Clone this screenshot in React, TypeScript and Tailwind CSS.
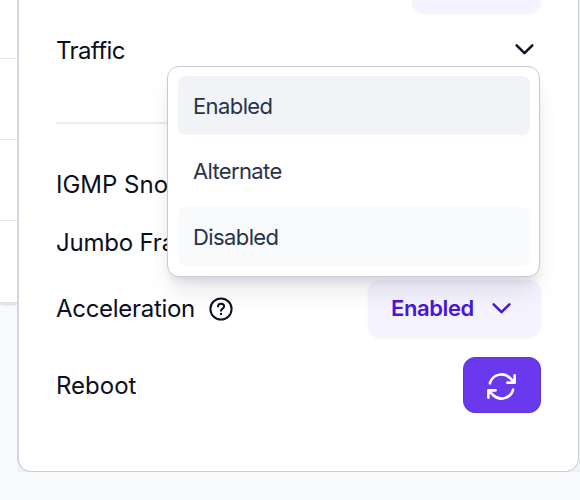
import type { ReactNode } from 'react'

function ChevronDown({ className }: { className?: string }) {
  return (
    <svg viewBox="0 0 24 24" fill="none" stroke="currentColor" strokeWidth={2.2} strokeLinecap="round" strokeLinejoin="round" className={className}>
      <path d="M19 8.25l-7 7-7-7" />
    </svg>
  )
}

function QuestionCircle({ className }: { className?: string }) {
  return (
    <svg viewBox="0 0 28 28" fill="none" stroke="currentColor" strokeWidth={2} strokeLinecap="round" strokeLinejoin="round" className={className}>
      <circle cx="14" cy="14" r="10.6" />
      <path d="M11 11.4c.2-1.6 1.4-2.6 3-2.6 1.8 0 3.1 1.1 3.1 2.7 0 2.2-3.1 2.1-3.1 4.3" />
      <circle cx="14" cy="18.9" r="1.2" fill="currentColor" stroke="none" />
    </svg>
  )
}

function ArrowPath({ className }: { className?: string }) {
  return (
    <svg viewBox="0 0 24 24" fill="none" stroke="currentColor" strokeWidth={1.75} strokeLinecap="round" strokeLinejoin="round" className={className}>
      <path d="M16.023 9.348h4.992v-.001M2.985 19.644v-4.992m0 0h4.992m-4.993 0 3.181 3.183a8.25 8.25 0 0 0 13.803-3.7M4.031 9.865a8.25 8.25 0 0 1 13.803-3.7l3.181 3.182m0-4.991v4.99" />
    </svg>
  )
}

const OPTIONS = [
  { label: 'Enabled', className: 'bg-[#f2f3f7] tracking-[-0.6px]' },
  { label: 'Alternate', className: 'bg-white tracking-[-0.65px]' },
  { label: 'Disabled', className: 'bg-[#f9fafc] tracking-[-0.6px]' },
]

function TrafficMenu() {
  return (
    <ul className="absolute left-[148px] top-[66px] z-10 flex h-[211px] w-[373px] flex-col gap-[6.5px] rounded-xl border border-[#c5cad9] bg-white py-[9px] pl-[10px] pr-[9px] shadow-[0_18px_26px_-5px_rgba(15,23,42,0.10),0_7px_10px_-4px_rgba(15,23,42,0.12)]">
      {OPTIONS.map(option => (
        <li
          key={option.label}
          className={`flex h-[59px] shrink-0 items-center rounded-lg px-[15px] pt-px text-[22px] text-[#283349] ${option.className}`}
        >
          {option.label}
        </li>
      ))}
    </ul>
  )
}

function Row({ label, className, children }: { label: ReactNode; className: string; children?: ReactNode }) {
  return (
    <div className={`flex shrink-0 items-center justify-between ${className}`}>
      <div className="flex items-center gap-3 whitespace-nowrap pt-[2px]">{label}</div>
      {children}
    </div>
  )
}

export default function App() {
  return (
    <div className="flex h-[500px] w-[580px] items-start overflow-hidden bg-[#f9fafc] font-['Inter',sans-serif]">
      <div className="flex w-[17px] shrink-0 flex-col border-b-2 border-[#e1e3e8] bg-white shadow-sm">
        <div className="h-[59px] border-b border-[#e2e6ee]" />
        <div className="h-[81px] border-b border-[#e2e6ee]" />
        <div className="h-[81px] border-b border-[#e2e6ee]" />
        <div className="h-[81px]" />
      </div>

      <div className="h-[472px] w-[563px] bg-[#eff1f5]">
        <div className="relative flex h-[472px] w-[562px] flex-col rounded-b-[14px] border-b border-l-2 border-r border-[#c9cedb] border-l-[#d3d7e1] bg-white pl-[37px] pr-[37px] text-[24px] tracking-[-0.3px] text-[#0b0f20]">
          <div className="flex shrink-0 justify-end">
            <div className="h-3 w-[129px] rounded-b-xl bg-[#f5f3ff] shadow-[0_2px_3px_rgba(15,23,42,0.05)]" />
          </div>

          <Row label="Traffic" className="h-[75px] pr-[3px] tracking-[-0.6px]">
            <ChevronDown className="size-[27px]" />
          </Row>
          <hr className="mr-1 mt-[35px] shrink-0 border-t-2 border-[#eaecf2]" />
          <Row label="IGMP Snooping" className="mt-[31px] h-[58px] tracking-[0px]" />
          <Row label="Jumbo Frames" className="h-[58px] tracking-[-0.2px]" />
          <Row
            label={<>Acceleration <QuestionCircle className="size-7" /></>}
            className="mt-[9px] h-14"
          >
            <button className="flex h-14 w-[173px] items-center gap-[14px] rounded-xl bg-[#f5f3ff] pl-[23px] text-[22px] font-semibold tracking-[-0.4px] text-[#4a16d8] shadow-[0_2px_3px_rgba(15,23,42,0.05)]">
              Enabled
              <ChevronDown className="size-[27px]" />
            </button>
          </Row>
          <Row label="Reboot" className="mt-[21px] h-14 tracking-normal">
            <button className="flex h-14 w-[78px] items-center justify-center rounded-xl border border-[#5f31e3] bg-[#6a38ed] pr-px pt-[2px] text-white">
              <ArrowPath className="size-[35px]" />
            </button>
          </Row>

          <TrafficMenu />
        </div>
      </div>
    </div>
  )
}
